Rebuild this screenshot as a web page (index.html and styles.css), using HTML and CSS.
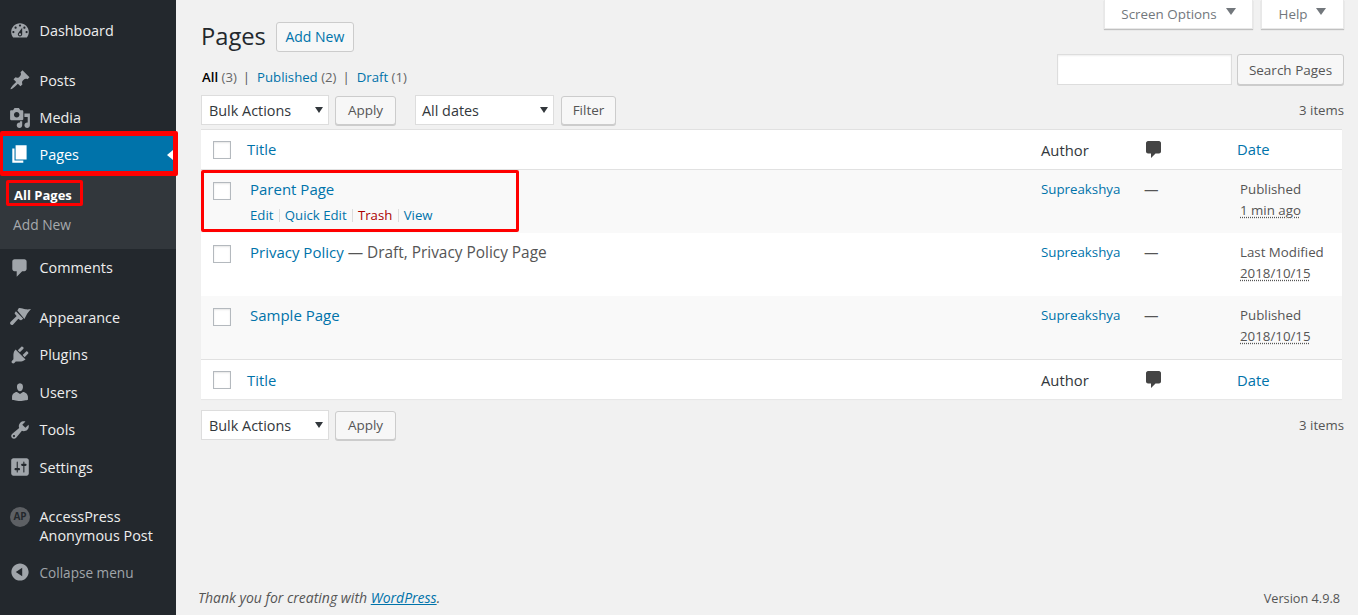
FILE: index.html
```html
<!DOCTYPE html>
<html lang="en">
<head>
<meta charset="utf-8">
<title>Pages</title>
<link rel="stylesheet" href="styles.css">
</head>
<body>
<aside class="sidebar">
  <nav class="menu">
    <a class="item first"><svg class="ico" viewBox="0 0 20 20"><path d="M3.76 16h12.48c1.1-1.37 1.76-3.11 1.76-5 0-4.42-3.58-8-8-8s-8 3.58-8 8c0 1.89.66 3.63 1.76 5zM10 4c.55 0 1 .45 1 1s-.45 1-1 1-1-.45-1-1 .45-1 1-1zM6 6c.55 0 1 .45 1 1s-.45 1-1 1-1-.45-1-1 .45-1 1-1zm8 0c.55 0 1 .45 1 1s-.45 1-1 1-1-.45-1-1 .45-1 1-1zm-5.37 5.55L12 7v6c0 1.1-.9 2-2 2s-2-.9-2-2c0-.57.24-1.08.63-1.45zM4 10c.55 0 1 .45 1 1s-.45 1-1 1-1-.45-1-1 .45-1 1-1zm12 0c.55 0 1 .45 1 1s-.45 1-1 1-1-.45-1-1 .45-1 1-1zm-5 3c0-.55-.45-1-1-1s-1 .45-1 1 .45 1 1 1 1-.45 1-1z" fill-rule="evenodd"/></svg><span>Dashboard</span></a>
    <a class="item gap"><svg class="ico" viewBox="0 0 20 20"><path d="M10.44 3.02l1.82-1.82 6.36 6.35-1.83 1.82c-1.05-.68-2.48-.57-3.41.36l-.75.75c-.92.93-1.04 2.35-.35 3.41l-1.83 1.82-2.41-2.41-2.8 2.79c-.42.42-3.38 2.71-3.8 2.29s1.86-3.39 2.28-3.81l2.79-2.79L4.1 9.36l1.83-1.82c1.05.69 2.48.57 3.4-.36l.75-.75c.93-.92 1.05-2.35.36-3.41z"/></svg><span>Posts</span></a>
    <a class="item"><svg class="ico" viewBox="0 0 20 20"><path d="M13 11V4c0-.55-.45-1-1-1h-1.67L9 1H5L3.67 3H2c-.55 0-1 .45-1 1v7c0 .55.45 1 1 1h10c.55 0 1-.45 1-1zM7 4.5c1.38 0 2.5 1.12 2.5 2.5S8.38 9.5 7 9.5 4.5 8.38 4.5 7 5.62 4.5 7 4.5zM14 6h5v10.5c0 1.38-1.12 2.5-2.5 2.5S14 17.88 14 16.5s1.12-2.5 2.5-2.5c.17 0 .34.02.5.05V9h-3V6zm-4 8.05V13h2v3.5c0 1.38-1.12 2.5-2.5 2.5S7 17.88 7 16.5 8.12 14 9.5 14c.17 0 .34.02.5.05z" fill-rule="evenodd"/></svg><span>Media</span></a>
    <a class="item current"><svg class="ico" viewBox="0 0 20 20"><path d="M6 15V2h10v13H6zm-1 1h8v2H3V5h2v11z"/></svg><span>Pages</span></a>
    <div class="submenu">
      <a class="sub active"><span class="sub-mark">All Pages</span></a>
      <a class="sub">Add New</a>
    </div>
    <a class="item"><svg class="ico" viewBox="0 0 20 20"><path d="M5 2h9c1.1 0 2 .9 2 2v7c0 1.1-.9 2-2 2h-2l-5 5v-5H5c-1.1 0-2-.9-2-2V4c0-1.1.9-2 2-2z"/></svg><span>Comments</span></a>
    <a class="item gap"><svg class="ico" viewBox="0 0 20 20"><path d="M8.800 2C11 1.500 13 3 15 3c2 .3 3.500 0 5-.3-1 1.300-2.500 2.800-3.500 4.300L14 11.800 7.600 4zM6.300 4.800L13 11.600 11 13c-1.500-.5-2.500-1.500-2.500-1.500L4 16.500c-1 1.300-2.700 1-3-.5-.2-1 .5-2 1.500-2.700L7 9.200C6 8 5 6.500 5 6.500z"/></svg><span>Appearance</span></a>
    <a class="item"><svg class="ico" viewBox="0 0 20 20"><path d="M13.11 4.36L9.87 7.6 8 5.73l3.24-3.24c.35-.34 1.05-.2 1.56.32.52.51.66 1.21.31 1.55zm-8 1.77l.91-1.12 9.01 9.01-1.19.84c-.71.71-2.63 1.16-3.82 1.16H6.14L4.9 17.26c-.59.59-1.54.59-2.12 0-.59-.58-.59-1.53 0-2.12l1.24-1.24v-3.88c0-1.13.4-3.19 1.09-3.89zm7.26 3.97l3.24-3.24c.34-.35 1.04-.21 1.55.31.52.51.66 1.21.31 1.55l-3.24 3.25z"/></svg><span>Plugins</span></a>
    <a class="item"><svg class="ico" viewBox="0 0 20 20"><path d="M10 9.25c-2.27 0-2.73-3.44-2.73-3.44C7 4.02 7.82 2 9.97 2c2.16 0 2.98 2.02 2.71 3.81 0 0-.41 3.44-2.68 3.44zm0 2.57L12.72 10c2.39 0 4.52 2.33 4.52 4.53v2.49s-3.65 1.13-7.24 1.13c-3.65 0-7.24-1.13-7.24-1.13v-2.49c0-2.25 1.94-4.48 4.47-4.48z"/></svg><span>Users</span></a>
    <a class="item"><svg class="ico" viewBox="0 0 20 20"><path d="M16.68 9.77c-1.34 1.34-3.3 1.67-4.95.99l-5.41 6.52c-.99.99-2.59.99-3.58 0s-.99-2.59 0-3.57l6.52-5.42c-.68-1.65-.35-3.61.99-4.95 1.28-1.28 3.12-1.62 4.72-1.06l-2.89 2.89 2.82 2.82 2.86-2.87c.53 1.58.18 3.39-1.08 4.65zM3.81 16.21c.4.39 1.04.39 1.43 0 .4-.4.4-1.04 0-1.43-.39-.4-1.03-.4-1.43 0-.39.39-.39 1.03 0 1.43z" fill-rule="evenodd"/></svg><span>Tools</span></a>
    <a class="item"><svg class="ico" viewBox="0 0 20 20"><path d="M18 16V4c0-1.1-.9-2-2-2H4c-1.1 0-2 .9-2 2v12c0 1.1.9 2 2 2h12c1.1 0 2-.9 2-2zM8 11h1c.55 0 1 .45 1 1s-.45 1-1 1H8v1.5c0 .28-.22.5-.5.5s-.5-.22-.5-.5V13H6c-.55 0-1-.45-1-1s.45-1 1-1h1V5.5c0-.28.22-.5.5-.5s.5.22.5.5V11zm5-2h-1c-.55 0-1-.45-1-1s.45-1 1-1h1V5.5c0-.28.22-.5.5-.5s.5.22.5.5V7h1c.55 0 1 .45 1 1s-.45 1-1 1h-1v5.5c0 .28-.22.5-.5.5s-.5-.22-.5-.5V9z" fill-rule="evenodd"/></svg><span>Settings</span></a>
    <a class="item plugin"><span class="ap">AP</span><span>AccessPress<br>Anonymous Post</span></a>
    <a class="collapse"><svg class="ico" viewBox="0 0 20 20"><path d="M10 2.16c4.33 0 7.84 3.51 7.84 7.84s-3.51 7.84-7.84 7.84S2.16 14.33 2.16 10 5.71 2.16 10 2.16zm2 11.72V6.12L6.18 9.97z" fill-rule="evenodd"/></svg><span>Collapse menu</span></a>
  </nav>
</aside>
<div class="main">
  <div class="content">
    <header class="head">
      <div class="head-left">
        <div class="title-row"><h1>Pages</h1><a class="btn add">Add New</a></div>
        <ul class="views">
          <li><b>All</b> <i>(3)</i></li>
          <li><a>Published</a> <i>(2)</i></li>
          <li><a>Draft</a> <i>(1)</i></li>
        </ul>
      </div>
      <div class="head-right">
        <div class="tabs">
          <a class="tab tab-screen">Screen Options<em></em></a>
          <a class="tab tab-help">Help<em></em></a>
        </div>
        <div class="search"><input class="search-input" type="text" aria-label="Search"><button class="btn">Search Pages</button></div>
      </div>
    </header>
    <div class="tablenav">
      <div class="sel sel-bulk">Bulk Actions</div><button class="btn apply">Apply</button>
      <div class="sel sel-date">All dates</div><button class="btn filter">Filter</button>
      <span class="count">3 items</span>
    </div>
    <table class="list">
      <colgroup><col class="c-cb"><col><col class="c-author"><col class="c-com"><col class="c-date"></colgroup>
      <thead>
        <tr><th class="cb"><span class="box"></span></th><th class="th-title"><a>Title</a></th><th class="th-author">Author</th><th class="th-com"><svg class="bubble" viewBox="0 0 15 17"><path d="M2 0h11c1 0 2 1 2 2v8.500c0 1-1 2-2 2H9.500L5 17v-4.500H2c-1 0-2-1-2-2V2c0-1 1-2 2-2z"/></svg></th><th class="th-date"><a>Date</a></th></tr>
      </thead>
      <tbody>
        <tr class="alt">
          <td class="cb"><span class="box"></span></td>
          <td class="td-title"><div class="mark-row"></div><a class="row-title">Parent Page</a>
            <div class="actions"><a>Edit</a><s></s><a>Quick Edit</a><s></s><a class="trash">Trash</a><s></s><a>View</a></div></td>
          <td><a>Supreakshya</a></td><td class="dash">—</td>
          <td class="td-date">Published<br><abbr>1 min ago</abbr></td>
        </tr>
        <tr>
          <td class="cb"><span class="box"></span></td>
          <td class="td-title"><a class="row-title">Privacy Policy</a><span class="state"> — Draft, Privacy Policy Page</span></td>
          <td><a>Supreakshya</a></td><td class="dash">—</td>
          <td class="td-date">Last Modified<br><abbr>2018/10/15</abbr></td>
        </tr>
        <tr class="alt">
          <td class="cb"><span class="box"></span></td>
          <td class="td-title"><a class="row-title">Sample Page</a></td>
          <td><a>Supreakshya</a></td><td class="dash">—</td>
          <td class="td-date">Published<br><abbr>2018/10/15</abbr></td>
        </tr>
      </tbody>
      <tfoot>
        <tr><th class="cb"><span class="box"></span></th><th class="th-title"><a>Title</a></th><th class="th-author">Author</th><th class="th-com"><svg class="bubble" viewBox="0 0 15 17"><path d="M2 0h11c1 0 2 1 2 2v8.500c0 1-1 2-2 2H9.500L5 17v-4.500H2c-1 0-2-1-2-2V2c0-1 1-2 2-2z"/></svg></th><th class="th-date"><a>Date</a></th></tr>
      </tfoot>
    </table>
    <div class="tablenav bottom">
      <div class="sel sel-bulk">Bulk Actions</div><button class="btn apply">Apply</button>
      <span class="count">3 items</span>
    </div>
  </div>
  <footer class="foot">
    <span class="thanks">Thank you for creating with <a>WordPress</a>.</span>
    <span class="version">Version 4.9.8</span>
  </footer>
</div>
</body>
</html>
```

FILE: styles.css
```css
* { box-sizing: border-box; }
html, body { margin: 0; height: 100%; }
body {
  display: flex;
  height: 615px;
  overflow: hidden;
  background: #f1f1f1;
  color: #444;
  font-family: "Open Sans", "Noto Sans", sans-serif;
  font-size: 14px;
}
a { color: #0073aa; text-decoration: none; }

/* sidebar */
.sidebar { width: 176px; flex: none; background: #23282d; }
.menu { display: flex; flex-direction: column; padding-top: 12px; }
.item {
  display: flex;
  align-items: center;
  height: 37.5px;
  padding-left: 9px;
  gap: 8.5px;
  color: #eee;
  font-size: 14.4px;
  position: relative;
}
.item.gap { margin-top: 12px; }
.ico { width: 22px; height: 22px; flex: none; fill: #a0a5aa; }
.item.current { background: #0073aa; color: #fff; height: 37.5px; margin-top: -1px; }
.item.current .ico { fill: #fff; }
.item.current::before {
  content: "";
  position: absolute;
  inset: -4.5px -2px -3px 0;
  border-style: solid;
  border-color: #f00;
  border-width: 5px 5px 5px 3px;
  border-radius: 2px;
}
.item.current::after {
  content: "";
  position: absolute;
  right: 3px;
  top: 14px;
  border: 5px solid transparent;
  border-left-width: 0;
  border-right: 6px solid #fff;
}
.submenu { background: #32373c; height: 76px; padding-top: 6px; display: flex; flex-direction: column; }
.sub { height: 30px; display: flex; align-items: center; padding-left: 13px; font-size: 13.8px; color: #a6a9ad; }
.sub.active { color: #fff; font-weight: 700; font-size: 13px; padding-left: 6px; height: 28px; margin-bottom: 2px; }
.sub-mark { border: 3px solid #f00; padding: 3px 5px 0; height: 26px; width: 77px; display: flex; align-items: center; white-space: nowrap; border-radius: 2px; }
.item.plugin { height: 38px; margin-top: 20.5px; line-height: 19px; padding-left: 10px; gap: 9.5px; }
.ap {
  width: 20px; height: 20px; border-radius: 50%;
  background: #5d6064; color: #23282d;
  font-size: 10px; font-weight: 700;
  display: flex; align-items: center; justify-content: center;
  flex: none; align-self: flex-start;
}
.collapse { display: flex; align-items: center; gap: 8.5px; padding: 0 0 0 9px; margin-top: 17.5px; color: #a0a5aa; font-size: 13.6px; height: 20px; }

/* main */
.main { flex: 1; min-width: 0; display: flex; flex-direction: column; }
.content { flex: 1; padding: 0 14px 0 25px; }
.head { display: flex; justify-content: space-between; height: 95px; }
.title-row { display: flex; align-items: center; gap: 10px; padding-top: 22px; height: 51px; }
h1 { margin: 0; font-size: 23.7px; font-weight: 400; color: #23282d; line-height: 29px; }
.views { list-style: none; margin: 16px 0 0; padding: 0 0 0 1px; display: flex; font-size: 13.2px; line-height: 20px; color: #555; }
.views li + li::before { content: "|"; color: #555; margin: 0 7px 0 6px; }
.views b { font-weight: 600; color: #000; }
.views i { font-style: normal; color: #666; }
.head-right { display: flex; flex-direction: column; align-items: flex-end; }
.tabs { display: flex; gap: 8px; }
.tab {
  background: #fff; color: #72777c;
  height: 29px; display: flex; align-items: center; justify-content: center; gap: 9px;
  font-size: 13.4px;
  padding-bottom: 1px;
  box-shadow: 0 1px 1px rgba(0,0,0,.2);
  border: 1px solid #e8e8e8; border-top: 0;
}
.tab-screen { width: 149px; }
.tab-help { width: 83px; }
.tab em { border: 5px solid transparent; border-top: 7px solid #72777c; border-bottom: 0; margin-top: -4px; }
.search { display: flex; gap: 5px; margin-top: 25px; }
.search-input { width: 175px; height: 31px; border: 1px solid #ddd; background: #fff; box-shadow: inset 0 1px 2px rgba(0,0,0,.07); }
.btn {
  display: inline-flex; align-items: center; justify-content: center;
  height: 30px; padding: 0 9px;
  background: #f7f7f7; color: #555;
  border: 1px solid #ccc; border-radius: 3px;
  box-shadow: 0 1px 0 #ccc;
  font: inherit; font-size: 13.5px;
}
.btn.add { color: #0073aa; background: #f7f7f7; box-shadow: none; width: 78px; font-size: 14px; padding: 0; }
.search .btn { width: 107px; height: 31px; }

.tablenav { display: flex; align-items: center; height: 30px; position: relative; }
.sel {
  position: relative; height: 30px; background: #fff;
  border: 1px solid #ddd; display: flex; align-items: center; padding-left: 7px;
  color: #32373c; font-size: 14.4px;
}
.sel::after { content: ""; position: absolute; right: 5px; top: 11px; border: 4px solid transparent; border-top: 6px solid #32373c; border-bottom: 0; }
.sel-bulk { width: 128px; }
.sel-date { width: 139px; margin-left: 19px; padding-left: 6px; }
.apply { width: 61px; margin-left: 6px; height: 29px; }
.filter { width: 55px; margin-left: 7px; height: 29px; }
.count { margin-left: auto; font-size: 13.2px; color: #555; }
.tablenav.bottom { margin-top: 11px; }

/* table */
.list {
  width: 1141px; margin-top: 4px;
  border-collapse: separate; border-spacing: 0; table-layout: fixed;
  background: #fff; border: 1px solid #e1e1e1; border-right: 0; border-left: 0; border-bottom: 0;
  box-shadow: 0 1px 1px rgba(0,0,0,.04);
  font-size: 13.3px;
}
.c-cb { width: 39px; }
.c-author { width: 104px; }
.c-com { width: 93px; }
.c-date { width: 112px; }
th { font-weight: 400; font-size: 14.8px; text-align: left; height: 40px; padding: 0 0 0 8px; color: #32373c; }
thead th { border-bottom: 1px solid #e1e1e1; }
tfoot th { border-top: 1px solid #e1e1e1; height: 40px; }
th a { position: relative; top: -1px; }
tfoot th a { top: 0; }
td { vertical-align: top; padding: 9px 0 0 8px; height: 63px; line-height: 21px; color: #555; }
.alt td { background: #f9f9f9; }
.cb { padding: 0 0 0 12px; }
td.cb { padding-top: 12px; }
.box { display: block; width: 18px; height: 18px; border: 1px solid #b4b9be; background: #fff; box-shadow: inset 0 1px 2px rgba(0,0,0,.1); }
.th-title { padding-left: 7px; }
.td-title { padding-left: 10px; position: relative; font-size: 15px; }
.row-title { font-weight: 500; }
.state { font-weight: 500; color: #555; font-size: 15.4px; }
.mark-row { position: absolute; left: -39px; top: 0; width: 318px; height: 62px; border: 3px solid #f00; border-radius: 2px; }
.actions { display: flex; align-items: center; font-size: 13.2px; margin-top: 5px; line-height: 20px; }
.actions s { width: 1px; height: 13px; background: #ddd; margin: 0 5.2px; }
.trash { color: #a00; }
.th-com { padding-left: 9px; }
.bubble { width: 15px; height: 17px; fill: #444; display: block; }
.dash { color: #555; padding-left: 7px; font-size: 14.5px; }
.th-date { padding-left: 7px; }
.td-date { padding-left: 10px; }
abbr { text-decoration: underline dotted; text-underline-offset: 2px; }

/* footer */
.foot { display: flex; justify-content: space-between; padding: 0 18px 7px 22px; font-size: 14px; color: #555; line-height: 20px; }
.version { font-size: 12.7px; }
.thanks { font-style: italic; }
.thanks a { text-decoration: underline; }
```
